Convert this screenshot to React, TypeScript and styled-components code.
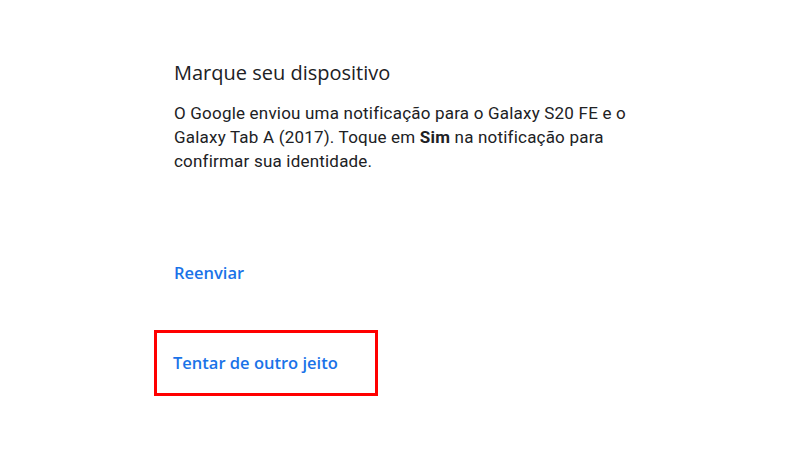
import React from "react";
import styled, { createGlobalStyle } from "styled-components";

const GlobalStyle = createGlobalStyle`
  body {
    margin: 0;
    background: #fff;
    font-family: Roboto, "Liberation Sans", sans-serif;
  }
`;

/**
 * Device confirmation step of the sign-in challenge
 */
const App = () => {
  return (
    <StyledPage>
      <GlobalStyle />
      <StyledColumn>
        <StyledTitle>Marque seu dispositivo</StyledTitle>
        <StyledText>
          O Google enviou uma notificação para o Galaxy S20 FE e o Galaxy Tab A
          (2017). Toque em <b>Sim</b> na notificação para confirmar sua
          identidade.
        </StyledText>

        <StyledResend>
          <StyledLink>Reenviar</StyledLink>
        </StyledResend>

        {/* Highlighted alternative option */}
        <StyledHighlight>
          <StyledLink>Tentar de outro jeito</StyledLink>
        </StyledHighlight>
      </StyledColumn>
    </StyledPage>
  );
};

export default App;

// ========= Start Styled Elements ==========
const StyledPage = styled.div`
  width: 800px;
  height: 451px;
  overflow: hidden;
`;

const StyledColumn = styled.div`
  display: flex;
  flex-direction: column;
  align-items: flex-start;
  width: 462px;
  padding: 59px 0 0 174px;
`;

const StyledTitle = styled.h1`
  margin: 0;
  font-family: "Open Sans", Roboto, sans-serif;
  font-size: 20px;
  font-weight: 400;
  line-height: 28px;
  color: #202124;
`;

const StyledText = styled.p`
  margin: 14px 0 0;
  font-size: 17px;
  line-height: 24px;
  letter-spacing: 0.2px;
  color: #202124;

  b {
    font-weight: 700;
  }
`;

const StyledResend = styled.div`
  margin-top: 88px;
`;

const StyledLink = styled.span`
  font-family: "Open Sans", Roboto, sans-serif;
  font-size: 16.5px;
  font-weight: 600;
  line-height: 24px;
  color: #1a73e8;
`;

const StyledHighlight = styled.div`
  margin: 45px 0 0 -20px;
  width: 202px;
  height: 60px;
  border: 3px solid #ff0000;
  display: flex;
  align-items: center;
  padding-left: 16px;
  box-sizing: content-box;
`;
// ========= End Styled Elements ==========
